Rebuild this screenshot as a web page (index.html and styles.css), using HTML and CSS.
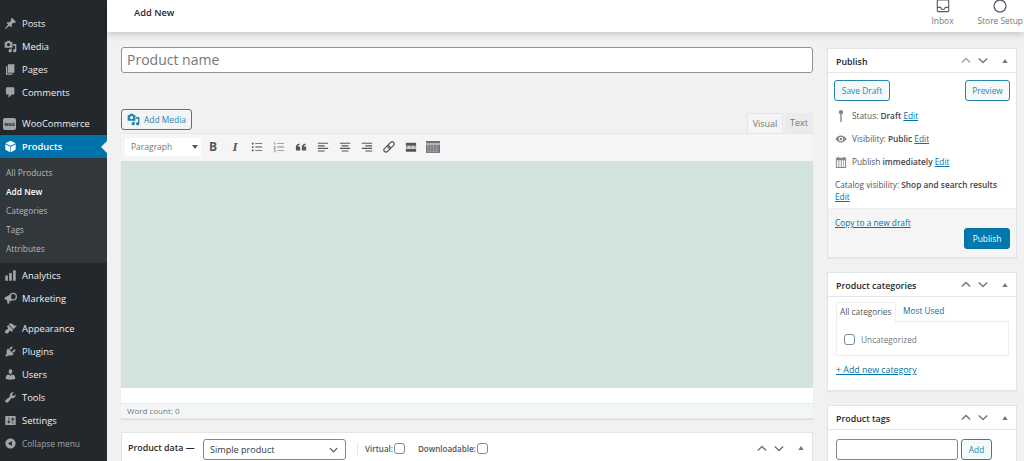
FILE: index.html
```html
<!DOCTYPE html>
<html lang="en">
<head>
<meta charset="utf-8">
<title>Add New Product</title>
<link rel="stylesheet" href="styles.css">
</head>
<body>
<svg class="sprite" aria-hidden="true">
  <symbol id="i-media" viewBox="0 0 20 20"><path d="M13 11V4c0-.55-.45-1-1-1h-1.670L9 1H5L3.670 3H2c-.55 0-1 .45-1 1v7c0 .55.45 1 1 1h10c.55 0 1-.45 1-1zM7 4.500c1.380 0 2.500 1.120 2.500 2.500S8.380 9.500 7 9.500 4.500 8.380 4.500 7 5.620 4.500 7 4.500zM14 6h5v10.500c0 1.380-1.120 2.500-2.500 2.500S14 17.880 14 16.500s1.120-2.500 2.500-2.500c.17 0 .34.02.5.05V9h-3V6zm-4 8.050V13h2v3.500c0 1.380-1.120 2.500-2.500 2.500S7 17.880 7 16.500 8.120 14 9.500 14c.17 0 .34.02.5.05z"/></symbol>
  <symbol id="i-up" viewBox="0 0 14 10"><path d="M1 8l6-6 6 6" fill="none" stroke="currentColor" stroke-width="2"/></symbol>
  <symbol id="i-down" viewBox="0 0 14 10"><path d="M1 2l6 6 6-6" fill="none" stroke="currentColor" stroke-width="2"/></symbol>
  <symbol id="i-tri" viewBox="0 0 8 6"><path d="M4 0l4 6H0z"/></symbol>
</svg>
<div class="admin">
  <nav class="side">
    <ul class="menu">
      <li><svg class="ic" viewBox="0 0 20 20"><path d="M10.440 3.020l1.820-1.820 6.360 6.350-1.830 1.820c-1.050-.68-2.480-.57-3.410.36l-.75.75c-.92.93-1.040 2.350-.35 3.410l-1.830 1.820-2.410-2.410-2.800 2.790c-.42.42-3.380 2.710-3.800 2.290s1.860-3.390 2.280-3.810l2.790-2.790L4.100 9.360l1.830-1.820c1.050.69 2.480.57 3.400-.36l.75-.75c.93-.92 1.050-2.350.36-3.410z"/></svg>Posts</li>
      <li><svg class="ic"><use href="#i-media"/></svg>Media</li>
      <li><svg class="ic" viewBox="0 0 20 20"><path d="M6 15V2h10v13H6zm-1 1h8v2H3V5h2v11z"/></svg>Pages</li>
      <li><svg class="ic" viewBox="0 0 20 20"><path d="M5 2h9c1.100 0 2 .9 2 2v7c0 1.100-.9 2-2 2h-2l-5 5v-5H5c-1.100 0-2-.9-2-2V4c0-1.100.9-2 2-2z"/></svg>Comments</li>
    </ul>
    <ul class="menu group">
      <li><span class="woo">woo</span>WooCommerce</li>
      <li class="current"><svg class="ic" viewBox="0 0 20 20"><path d="M10 1l8 4-8 4-8-4zM2 6.500l7.500 3.700V19L3 15.500c-.6-.3-1-.9-1-1.600zM18 6.500v7.400c0 .7-.4 1.300-1 1.600L10.500 19v-8.800z"/></svg>Products</li>
    </ul>
    <ul class="sub">
      <li>All Products</li>
      <li class="on">Add New</li>
      <li>Categories</li>
      <li>Tags</li>
      <li>Attributes</li>
    </ul>
    <ul class="menu after-sub">
      <li><svg class="ic" viewBox="0 0 20 20"><path d="M2 10h4v8H2zM8 6h4v12H8zM14 2h4v16h-4z"/></svg>Analytics</li>
      <li><svg class="ic" viewBox="0 0 20 20"><path d="M1 8.500l10-5.500v12L8 13.500 8.500 17.500 5.500 18l-1-6H3c-1.500 0-2-1-2-1.800z"/><circle cx="14" cy="7" r="5" fill="none" stroke="currentColor" stroke-width="2"/></svg>Marketing</li>
    </ul>
    <ul class="menu group tight">
      <li><svg class="ic" viewBox="0 0 20 20"><path d="M14.480 11.060L7.410 3.990l1.500-1.500c.5-.56 2.300-.47 3.510.32 1.210.8 1.430 1.280 2.910 2.100 1.180.64 2.450 1.260 4.450.85zm-.71.71L6.700 4.700 4.930 6.470c-.39.39-.39 1.020 0 1.410l1.060 1.060c.39.39.39 1.030 0 1.420-.6.6-1.430 1.110-2.210 1.690-.35.26-.7.53-1.010.84C1.430 13.230.99 14.600 1.470 15.900c.43 1.170 1.990 2.500 3.510 1.760.92-.45 1.500-1.280 2.090-2.010.58-.72 1.160-1.420 1.790-2.050.39-.39 1.020-.39 1.410 0l1.060 1.060c.39.39 1.020.39 1.410 0z"/></svg>Appearance</li>
      <li><svg class="ic" viewBox="0 0 20 20"><path d="M13.110 4.360L9.870 7.600 8 5.730l3.240-3.240c.35-.34 1.050-.2 1.560.32.52.51.66 1.210.31 1.550zm-8 1.770l.91-1.120 9.010 9.010-1.190.84c-.71.71-2.630 1.160-3.820 1.160H6.140L4.900 17.260c-.59.59-1.540.59-2.120 0-.59-.58-.59-1.530 0-2.120l1.240-1.240v-3.880c0-1.130.4-3.190 1.090-3.890zm7.260 3.970l3.240-3.240c.34-.35 1.040-.21 1.550.31.52.51.66 1.210.31 1.550l-3.240 3.250z"/></svg>Plugins</li>
      <li><svg class="ic" viewBox="0 0 20 20"><path d="M10 9.250c-2.270 0-2.730-3.440-2.730-3.440C7 4.020 7.820 2 9.970 2c2.160 0 2.980 2.020 2.710 3.810 0 0-.41 3.440-2.680 3.440zm0 2.570L12.720 10c2.390 0 4.520 2.330 4.520 4.530v2.490s-3.650 1.130-7.240 1.130c-3.650 0-7.240-1.130-7.240-1.130v-2.490c0-2.250 1.940-4.480 4.470-4.480z"/></svg>Users</li>
      <li><svg class="ic" viewBox="0 0 20 20"><path d="M16.680 9.770c-1.340 1.340-3.300 1.670-4.950.99l-5.410 6.520c-.99.99-2.590.99-3.580 0s-.99-2.590 0-3.570l6.520-5.420c-.68-1.650-.35-3.610.99-4.950 1.280-1.280 3.120-1.620 4.720-1.060l-2.890 2.890 2.820 2.820 2.860-2.870c.53 1.580.18 3.390-1.080 4.650z"/></svg>Tools</li>
      <li><svg class="ic" viewBox="0 0 20 20"><path d="M18 16V4c0-.55-.45-1-1-1H3c-.55 0-1 .45-1 1v12c0 .55.45 1 1 1h14c.55 0 1-.45 1-1zM8 11h1c.55 0 1 .45 1 1s-.45 1-1 1H8v1.500c0 .28-.22.5-.5.5s-.5-.22-.5-.5V13H6c-.55 0-1-.45-1-1s.45-1 1-1h1V5.500c0-.28.22-.5.5-.5s.5.22.5.5V11zm5-2h-1c-.55 0-1-.45-1-1s.45-1 1-1h1V5.500c0-.28.22-.5.5-.5s.5.22.5.5V7h1c.55 0 1 .45 1 1s-.45 1-1 1h-1v5.500c0 .28-.22.5-.5.5s-.5-.22-.5-.5V9z"/></svg>Settings</li>
      <li class="collapse"><svg class="ic" viewBox="0 0 20 20"><path d="M10 2.160c4.330 0 7.840 3.510 7.840 7.840s-3.510 7.840-7.840 7.840S2.160 14.330 2.160 10 5.710 2.160 10 2.160zm2 11.720V6.120L6.180 9.970z"/></svg>Collapse menu</li>
    </ul>
  </nav>

  <div class="page">
    <header class="top">
      <h1 class="crumb">Add New</h1>
      <div class="top-actions">
        <div class="top-act">
          <svg class="top-ic" viewBox="0 0 16 16"><path d="M2.500 1h11a1 1 0 0 1 1 1v11.500a1 1 0 0 1-1 1h-11a1 1 0 0 1-1-1V2a1 1 0 0 1 1-1zM1.500 9.500h4a2.500 2.500 0 0 0 5 0h4" fill="none" stroke="#555d66" stroke-width="1.300"/></svg>
          Inbox
        </div>
        <div class="top-act">
          <svg class="top-ic" viewBox="0 0 16 16"><circle cx="8" cy="8" r="6.800" fill="none" stroke="#555d66" stroke-width="1.400"/></svg>
          Store Setup
        </div>
      </div>
    </header>

    <div class="content">
      <main class="left">
        <div class="title-input">Product name</div>
        <div class="media-row">
          <button class="btn btn-media"><svg class="media-ic"><use href="#i-media"/></svg>Add Media</button>
          <div class="tabs">
            <span class="tab active">Visual</span>
            <span class="tab">Text</span>
          </div>
        </div>
        <div class="editor">
          <div class="toolbar">
            <div class="format">Paragraph<span class="caret"></span></div>
            <span class="tool tb">B</span>
            <span class="tool ti">I</span>
            <svg class="tool-ic" viewBox="0 0 14 14"><path d="M1 2h2v2H1zM1 6h2v2H1zM1 10h2v2H1zM5 2.500h8v1H5zM5 6.500h8v1H5zM5 10.500h8v1H5z"/></svg>
            <svg class="tool-ic light" viewBox="0 0 14 14"><path d="M1.500 1.500h1v3h-1zM1 6h2v1H2v1h1v1H1zM1 10h2v3H1v-.6h1.200v-.5H1v-.6h1.200v-.6H1zM5 2.500h8v1H5zM5 6.500h8v1H5zM5 10.500h8v1H5z"/></svg>
            <svg class="tool-ic" viewBox="0 0 14 14"><path d="M1 7.500C1 5 2.500 3.500 5.500 3v1.500C4.300 4.800 3.600 5.500 3.500 6.300H6V11H1zM8 7.500C8 5 9.500 3.500 12.500 3v1.500c-1.200.3-1.900 1-2 1.800H13V11H8z"/></svg>
            <svg class="tool-ic" viewBox="0 0 14 14"><path d="M1 2h12v1.300H1zM1 5h8v1.300H1zM1 8h12v1.300H1zM1 11h8v1.300H1z"/></svg>
            <svg class="tool-ic" viewBox="0 0 14 14"><path d="M1 2h12v1.300H1zM3 5h8v1.300H3zM1 8h12v1.300H1zM3 11h8v1.300H3z"/></svg>
            <svg class="tool-ic" viewBox="0 0 14 14"><path d="M1 2h12v1.300H1zM5 5h8v1.300H5zM1 8h12v1.300H1zM5 11h8v1.300H5z"/></svg>
            <svg class="tool-ic" viewBox="0 0 14 14"><g transform="rotate(-45 7 7)" fill="none" stroke="currentColor" stroke-width="1.400"><rect x="-.5" y="4.600" width="8.500" height="4.800" rx="2.400"/><rect x="6" y="4.600" width="8.500" height="4.800" rx="2.400"/></g></svg>
            <svg class="tool-ic" viewBox="0 0 14 14"><path d="M1 2h12v3.500H1zM1 6.500h3v1.200H1zM5.500 6.500h3v1.200h-3zM10 6.500h3v1.200h-3zM1 9h12v3.500H1z"/></svg>
            <svg class="tool-ic wide" viewBox="0 0 14 14"><path d="M0 1h14v2.500H0zM0 4.500h14v8.500H0z"/><path d="M1 6h12M1 8h12M1 10h12M1 11.800h12" stroke="#f5f5f5" stroke-width=".6" stroke-dasharray="1 .5"/></svg>
          </div>
          <div class="canvas"></div>
          <div class="canvas-foot"></div>
          <div class="status">Word count: 0</div>
        </div>
        <section class="product-data">
          <strong class="pd-label">Product data —</strong>
          <div class="pd-select">Simple product
            <svg class="pd-chev"><use href="#i-down"/></svg>
          </div>
          <span class="pd-sep"></span>
          <label class="pd-check">Virtual: <span class="check"></span></label>
          <label class="pd-check">Downloadable: <span class="check"></span></label>
          <div class="handles pd-handles">
            <svg class="h-chev"><use href="#i-up"/></svg>
            <svg class="h-chev"><use href="#i-down"/></svg>
            <svg class="h-tri"><use href="#i-tri"/></svg>
          </div>
        </section>
      </main>

      <aside class="right">
        <section class="box publish">
          <div class="box-head">
            <h2>Publish</h2>
            <div class="handles">
              <svg class="h-chev faint"><use href="#i-up"/></svg>
              <svg class="h-chev"><use href="#i-down"/></svg>
              <svg class="h-tri"><use href="#i-tri"/></svg>
            </div>
          </div>
          <div class="pub-btns">
            <button class="btn btn-draft">Save Draft</button>
            <button class="btn btn-preview">Preview</button>
          </div>
          <div class="pub-row">
            <svg class="pub-ic" viewBox="0 0 14 14"><path d="M7 0a2.600 2.600 0 0 1 2.600 2.600c0 1.200-.8 2.200-1.800 2.500V14H6.200V5.100C5.200 4.800 4.400 3.800 4.400 2.600A2.600 2.600 0 0 1 7 0z"/></svg>
            <span>Status: <b>Draft</b> <a>Edit</a></span>
          </div>
          <div class="pub-row">
            <svg class="pub-ic" viewBox="0 0 14 14"><path d="M7 3c3 0 5.300 2 6.500 4C12.300 9 10 11 7 11S1.700 9 .5 7C1.700 5 4 3 7 3zm0 1.300A2.700 2.700 0 1 0 7 9.700 2.700 2.700 0 0 0 7 4.300zM7 5.500a1.500 1.500 0 1 1 0 3 1.500 1.500 0 0 1 0-3z" fill-rule="evenodd"/></svg>
            <span>Visibility: <b>Public</b> <a>Edit</a></span>
          </div>
          <div class="pub-row">
            <svg class="pub-ic" viewBox="0 0 14 14"><path fill-rule="evenodd" d="M1 2h2V.8h1.500V2h5V.8H11V2h2v12H1zM2.200 5v7.800h1.800V5zm2.800 0v7.800h1.800V5zm2.800 0v7.800h1.800V5zm2.500 0v7.800h1.500V5z"/></svg>
            <span>Publish <b>immediately</b> <a>Edit</a></span>
          </div>
          <p class="catalog">Catalog visibility: <b>Shop and search results</b> <a>Edit</a></p>
          <div class="pub-foot">
            <a class="copy">Copy to a new draft</a>
            <button class="btn btn-primary">Publish</button>
          </div>
        </section>

        <section class="box cats">
          <div class="box-head">
            <h2>Product categories</h2>
            <div class="handles">
              <svg class="h-chev"><use href="#i-up"/></svg>
              <svg class="h-chev"><use href="#i-down"/></svg>
              <svg class="h-tri"><use href="#i-tri"/></svg>
            </div>
          </div>
          <div class="cat-tabs">
            <span class="cat-tab active">All categories</span>
            <a class="cat-tab">Most Used</a>
          </div>
          <div class="cat-panel">
            <span class="check big"></span>Uncategorized
          </div>
          <a class="add-cat">+ Add new category</a>
        </section>

        <section class="box tags">
          <div class="box-head">
            <h2>Product tags</h2>
            <div class="handles">
              <svg class="h-chev"><use href="#i-up"/></svg>
              <svg class="h-chev"><use href="#i-down"/></svg>
              <svg class="h-tri"><use href="#i-tri"/></svg>
            </div>
          </div>
          <div class="tag-row">
            <span class="tag-input"></span>
            <button class="btn btn-add">Add</button>
          </div>
        </section>
      </aside>
    </div>
  </div>
</div>
</body>
</html>
```
FILE: styles.css
```css
* { box-sizing: border-box; }
html, body { margin: 0; height: 461px; overflow: hidden; }
body {
  font-family: "Open Sans", "Noto Sans", sans-serif;
  font-size: 8.3px;
  color: #444;
  background: #f1f1f1;
}
ul { list-style: none; margin: 0; padding: 0; }
h1, h2, p { margin: 0; }
a { color: #0073aa; text-decoration: underline; }
.sprite { display: none; }

.admin { display: flex; height: 461px; }

/* sidebar */
.side {
  width: 107px;
  flex: none;
  background: #23282d;
  color: #eee;
  padding-top: 12px;
}
.menu li {
  height: 23px;
  display: flex;
  align-items: center;
  font-size: 9.4px;
  position: relative;
}
.menu.group { margin-top: 8px; }
.menu.group.tight { margin-top: 7px; }
.ic {
  width: 13px;
  height: 13px;
  margin: 0 5px 0 4px;
  fill: #a0a5aa;
  color: #a0a5aa;
  flex: none;
}
.woo {
  width: 13px;
  height: 12px;
  margin: 0 6px 0 3px;
  flex: none;
  background: #a0a5aa;
  border-radius: 2px;
  color: #23282d;
  font-size: 5px;
  font-weight: 700;
  line-height: 12px;
  text-align: center;
}
.menu li.current {
  background: #0073aa;
  color: #fff;
  font-weight: 600;
}
.menu li.current .ic { fill: #fff; }
.menu li.current::after {
  content: "";
  position: absolute;
  right: 0;
  top: 6px;
  border: 6px solid transparent;
  border-right-color: #f1f1f1;
  border-left-width: 0;
}
.sub {
  background: #32373c;
  padding: 5px 0;
}
.sub li {
  height: 19px;
  line-height: 19px;
  padding-left: 6px;
  font-size: 8.4px;
  color: #b4b9be;
}
.sub li.on { color: #fff; font-weight: 600; }
.after-sub { margin-top: 1px; }
.menu li.collapse { color: #a0a5aa; font-size: 8.4px; }

/* page */
.page { flex: 1; min-width: 0; display: flex; flex-direction: column; }
.top {
  height: 32px;
  flex: none;
  background: #fff;
  box-shadow: 0 2px 7px rgba(0, 0, 0, .2);
  display: flex;
  justify-content: space-between;
  padding: 0 1px 0 27px;
  position: relative;
}
.crumb {
  font-size: 9.3px;
  font-weight: 600;
  color: #23282d;
  line-height: 25px;
}
.top-actions { display: flex; gap: 24px; }
.top-act {
  display: flex;
  flex-direction: column;
  align-items: center;
  font-size: 8.4px;
  color: #72777c;
  line-height: 12px;
  margin-top: -1px;
}
.top-ic { width: 14px; height: 14px; margin-bottom: 2px; }

.content { display: flex; flex: 1; min-height: 0; padding: 15px 0 0 14px; overflow: hidden; }
.left { width: 692px; flex: none; }
.right { width: 190px; margin-left: 14px; flex: none; }

.title-input {
  height: 26px;
  background: #fff;
  border: 1px solid #8d9399;
  border-radius: 3px;
  padding-left: 5px;
  font-size: 14px;
  line-height: 24px;
  color: #72777c;
}

.btn {
  font-family: inherit;
  font-size: 8.4px;
  color: #0071a1;
  background: #f3f5f6;
  border: 1px solid #0071a1;
  border-radius: 3px;
  height: 21px;
  padding: 0 7px;
  display: inline-flex;
  align-items: center;
  justify-content: center;
  white-space: nowrap;
  opacity: .85;
}
.media-row {
  display: flex;
  justify-content: space-between;
  align-items: flex-end;
  margin-top: 36px;
  height: 24px;
}
.btn-media { margin-bottom: 3px; width: 71px; padding: 0 5px; }
.media-ic { width: 13px; height: 13px; fill: #0071a1; margin-right: 4px; flex: none; }
.tabs { display: flex; gap: 2px; }
.tab {
  width: 36px;
  height: 20px;
  line-height: 20px;
  text-align: center;
  color: #72777c;
  font-size: 9px;
}
.tab.active { background: #f5f5f5; border: 1px solid #e5e5e5; border-bottom: 0; line-height: 19px; }
.tab:not(.active) { width: 28px; background: #ebebeb; }

.editor { border-bottom: 1px solid #e2e4e7; box-shadow: 0 1px 1px rgba(0, 0, 0, .08); }
.toolbar {
  height: 28px;
  background: #f5f5f5;
  border-top: 1px solid #e5e5e5;
  display: flex;
  align-items: center;
  padding: 0 0 2px 4px;
  color: #50575d;
}
.format {
  width: 76px;
  height: 18px;
  background: #fff;
  border-radius: 2px;
  padding-left: 6px;
  font-size: 8.5px;
  line-height: 18px;
  color: #72777c;
  position: relative;
  margin-right: 1px;
}
.caret {
  position: absolute;
  right: 3px;
  top: 7px;
  border: 3px solid transparent;
  border-top: 4px solid #50575d;
  border-bottom: 0;
}
.tool { width: 22px; text-align: center; font-size: 12px; font-weight: 700; color: #50575d; }
.ti { font-family: "Liberation Serif", serif; font-style: italic; font-size: 13px; }
.tool-ic { width: 12px; height: 12px; margin: 0 5px; fill: #50575d; color: #50575d; flex: none; }
.tool-ic.light { fill: #82878c; }
.tool-ic.wide { width: 14px; height: 14px; margin: 0 4px; fill: #6c7278; }

.canvas { height: 227px; background: #d3e4de; }
.canvas-foot { height: 15px; background: #fff; }
.status {
  height: 15px;
  line-height: 14px;
  background: #f3f6f6;
  padding-left: 6px;
  font-size: 8px;
  color: #72777c;
  border-top: 1px dotted #ddd;
}

.product-data {
  margin-top: 13px;
  height: 40px;
  background: #fff;
  border: 1px solid #e5e5e5;
  display: flex;
  align-items: flex-start;
  padding: 6px 0 0 6px;
}
.pd-label { width: 67px; font-size: 8.9px; font-weight: 600; color: #23282d; line-height: 18px; white-space: nowrap; }
.pd-select {
  width: 143px;
  height: 21px;
  margin-left: 8px;
  border: 1px solid #7e8993;
  border-radius: 3px;
  padding: 0 6px;
  font-size: 9.1px;
  line-height: 20px;
  color: #32373c;
  position: relative;
}
.pd-chev { position: absolute; right: 7px; top: 7px; width: 9px; height: 6px; color: #555; }
.pd-sep { width: 1px; height: 12px; margin: 4px 0 0 11px; background: #e5e5e5; }
.pd-check {
  display: flex;
  align-items: center;
  gap: 1px;
  margin-left: 7px;
  font-size: 8px;
  font-weight: 600;
  color: #50575d;
  height: 18px;
  white-space: nowrap;
}
.pd-check + .pd-check { margin-left: 13px; }
.check {
  display: inline-block;
  width: 11px;
  height: 11px;
  border: 1px solid #7e8993;
  border-radius: 3px;
  background: #fff;
  flex: none;
}
.handles { display: flex; align-items: center; margin-left: auto; }
.h-chev { width: 10px; height: 7px; color: #72777c; margin-right: 7px; }
.h-chev.faint { color: #a0a5aa; }
.h-tri { width: 6px; height: 4px; margin-left: 7px; fill: #72777c; }
.pd-handles { height: 18px; padding-right: 8px; }

/* right column */
.box { background: #fff; border: 1px solid #e2e4e7; box-shadow: 0 1px 1px rgba(0, 0, 0, .04); }
.box-head {
  height: 24px;
  border-bottom: 1px solid #e5e5e5;
  display: flex;
  align-items: center;
  padding: 0 8px;
}
.box-head h2 { font-size: 8.9px; font-weight: 600; color: #23282d; padding-top: 1px; }
.publish { margin-top: 1px; height: 210px; }
.pub-btns { display: flex; justify-content: space-between; padding: 7px 6px 0; }
.pub-btns .btn { background: #f3f8fa; }
.btn-draft { width: 56px; padding: 0; }
.btn-preview { width: 45px; padding: 0; }
.pub-row {
  display: flex;
  align-items: center;
  height: 23px;
  padding-left: 7px;
  color: #50575d;
}
.pub-btns + .pub-row { margin-top: 3px; }
.pub-ic { width: 12px; height: 12px; fill: #82878c; margin-right: 5px; flex: none; }
b { font-weight: 600; color: #444; }
.catalog { padding: 6px 6px 0 7px; line-height: 12px; color: #50575d; }
.pub-foot {
  margin-top: 5px;
  height: 49px;
  background: #f5f5f5;
  border-top: 1px solid #eee;
  padding: 7px 6px 0 7px;
}
.copy { display: block; line-height: 13px; margin-bottom: -1px; }
.btn-primary {
  display: flex;
  margin-left: auto;
  width: 46px;
  padding: 0;
  background: #0079ae;
  color: #fff;
  border-color: #0071a1;
  opacity: 1;
}
.cats { margin-top: 14px; height: 119px; }
.cat-tabs { display: flex; padding: 5px 7px 0 8px; height: 24px; }
.cat-tab { padding: 0 3px; line-height: 18px; text-decoration: none; white-space: nowrap; }
.cat-tab.active {
  border: 1px solid #eee;
  border-bottom: 0;
  background: #fff;
  height: 20px;
  color: #555;
  position: relative;
  z-index: 1;
  width: 60px;
}
.cat-tab + .cat-tab { margin-left: 4px; }
.cat-panel {
  margin: 0 7px 0 8px;
  height: 35px;
  border: 1px solid #eee;
  display: flex;
  align-items: center;
  padding: 1px 0 0 7px;
  color: #72777c;
}
.check.big { margin-right: 6px; }
.add-cat { display: block; margin: 8px 8px 0; font-size: 8.8px; line-height: 13px; font-weight: 500; }
.tags { margin-top: 14px; height: 70px; }
.tag-row { display: flex; gap: 3px; padding: 9px 8px 0; align-items: center; }
.tag-input {
  width: 122px;
  height: 21px;
  border: 1px solid #7e8993;
  border-radius: 3px;
  background: #fff;
}
.btn-add { width: 31px; padding: 0; background: #f3f8fa; }
```
